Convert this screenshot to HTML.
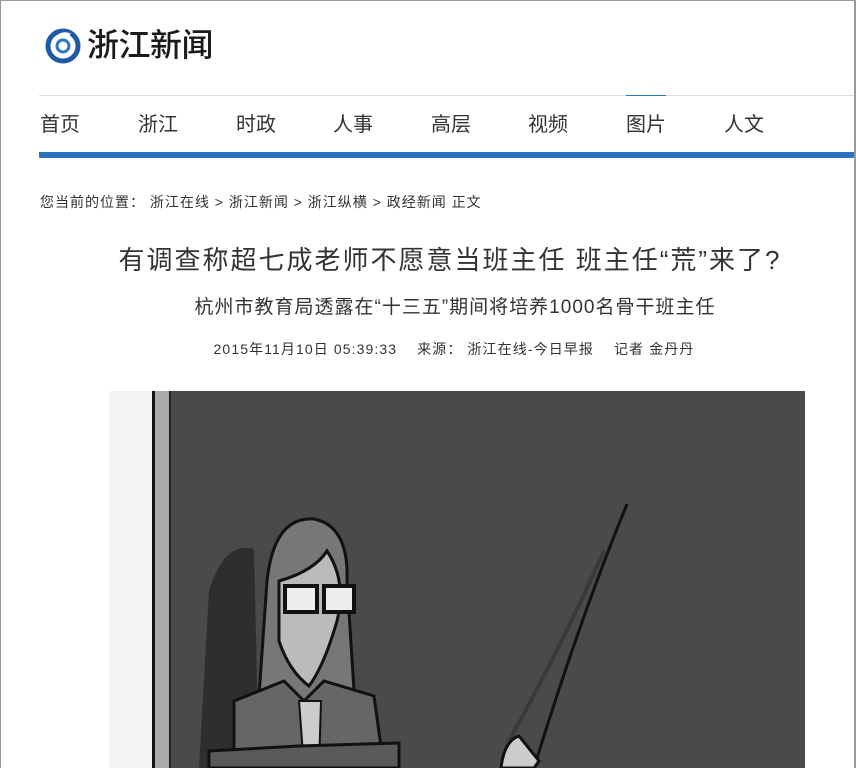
<!DOCTYPE html>
<html><head><meta charset="utf-8"><style>
*{margin:0;padding:0}
body{width:856px;height:768px;overflow:hidden;background:#fff;position:relative;font-family:"Liberation Sans","Noto Sans CJK SC",sans-serif;color:#333}
.a{position:absolute;white-space:nowrap}
.nav{top:112px;font-size:20px;color:#333;line-height:26px}
</style></head><body>
<div class="a" style="left:0;top:0;height:768px;border-left:1px solid #999;border-top:1px solid #999;border-right:2px solid #999;box-sizing:border-box;width:856px"></div>
<svg class="a" style="left:44px;top:27px" width="40" height="38" viewBox="0 0 40 38">
<circle cx="19" cy="19" r="15" fill="none" stroke="#1f5aa8" stroke-width="5"/>
<path d="M26 8 A10 10 0 1 0 28 24" fill="none" stroke="#fff" stroke-width="3"/>
<circle cx="19" cy="19" r="6" fill="none" stroke="#2b7bc4" stroke-width="3"/>
</svg>
<div class="a" style="left:87px;top:27px;font-size:32px;line-height:36px;color:#1a1a1a;font-weight:500;letter-spacing:-0.5px">浙江新闻</div>
<div class="a" style="left:39px;top:95px;width:815px;height:1px;background:#ddd"></div>
<div class="a" style="left:626px;top:95px;width:40px;height:1px;background:#2a73c0"></div>
<div class="a nav" style="left:40px">首页</div>
<div class="a nav" style="left:138px">浙江</div>
<div class="a nav" style="left:236px">时政</div>
<div class="a nav" style="left:333px">人事</div>
<div class="a nav" style="left:431px">高层</div>
<div class="a nav" style="left:528px">视频</div>
<div class="a nav" style="left:626px">图片</div>
<div class="a nav" style="left:724px">人文</div>
<div class="a" style="left:39px;top:152px;width:815px;height:6px;background:#2a73c0"></div>
<div class="a" style="left:40px;top:192px;font-size:14px;letter-spacing:1px;color:#333">您当前的位置： 浙江在线 &gt; 浙江新闻 &gt; 浙江纵横 &gt; 政经新闻 正文</div>
<div class="a" style="left:0;width:900px;text-align:center;top:244px;font-size:26px;letter-spacing:2px;line-height:32px;color:#333">有调查称超七成老师不愿意当班主任 班主任“荒”来了?</div>
<div class="a" style="left:0;width:910px;text-align:center;top:295px;font-size:19px;letter-spacing:1px;line-height:26px;color:#333">杭州市教育局透露在“十三五”期间将培养1000名骨干班主任</div>
<div class="a" style="left:0;width:908px;text-align:center;top:340px;font-size:14px;letter-spacing:1.1px;line-height:18px;color:#333">2015年11月10日 05:39:33 &nbsp;&nbsp;&nbsp;来源： 浙江在线-今日早报 &nbsp;&nbsp;&nbsp;记者 金丹丹</div>
<svg class="a" style="left:109px;top:391px" width="696" height="377" viewBox="0 0 696 377">
<rect width="696" height="377" fill="#4a4a4a"/>
<rect width="43" height="377" fill="#f3f3f3"/>
<rect x="43" y="0" width="3" height="377" fill="#111"/>
<rect x="46" y="0" width="14" height="377" fill="#aaa"/>
<rect x="60" y="0" width="2" height="377" fill="#222"/>
<path d="M90 377 L100 200 Q115 150 145 158 L150 377Z" fill="#2e2e2e"/>
<path d="M145 377 L158 190 Q165 125 205 128 Q240 135 238 190 L250 377Z" fill="#777" stroke="#111" stroke-width="3"/>
<path d="M170 190 Q205 180 218 160 Q238 190 228 230 Q215 275 200 295 Q180 280 170 250Z" fill="#bbb" stroke="#111" stroke-width="3"/>
<rect x="176" y="195" width="32" height="26" fill="#eee" stroke="#111" stroke-width="4"/>
<rect x="215" y="195" width="30" height="26" fill="#eee" stroke="#111" stroke-width="4"/>
<path d="M125 377 L125 310 L175 290 L195 310 L215 290 L265 305 L275 377Z" fill="#666" stroke="#111" stroke-width="3"/>
<path d="M190 310 L195 377 L210 377 L212 310Z" fill="#ccc" stroke="#111" stroke-width="2"/>
<path d="M100 360 L190 355 L290 352 L290 377 L100 377Z" fill="#5a5a5a" stroke="#111" stroke-width="3"/>
<path d="M518 113 Q470 230 425 377" fill="none" stroke="#111" stroke-width="3"/>
<path d="M495 160 Q450 260 400 350" fill="none" stroke="#3a3a3a" stroke-width="4"/>
<path d="M392 377 Q395 350 410 345 L430 370 L425 377Z" fill="#ccc" stroke="#111" stroke-width="3"/>
</svg>
</body></html>
